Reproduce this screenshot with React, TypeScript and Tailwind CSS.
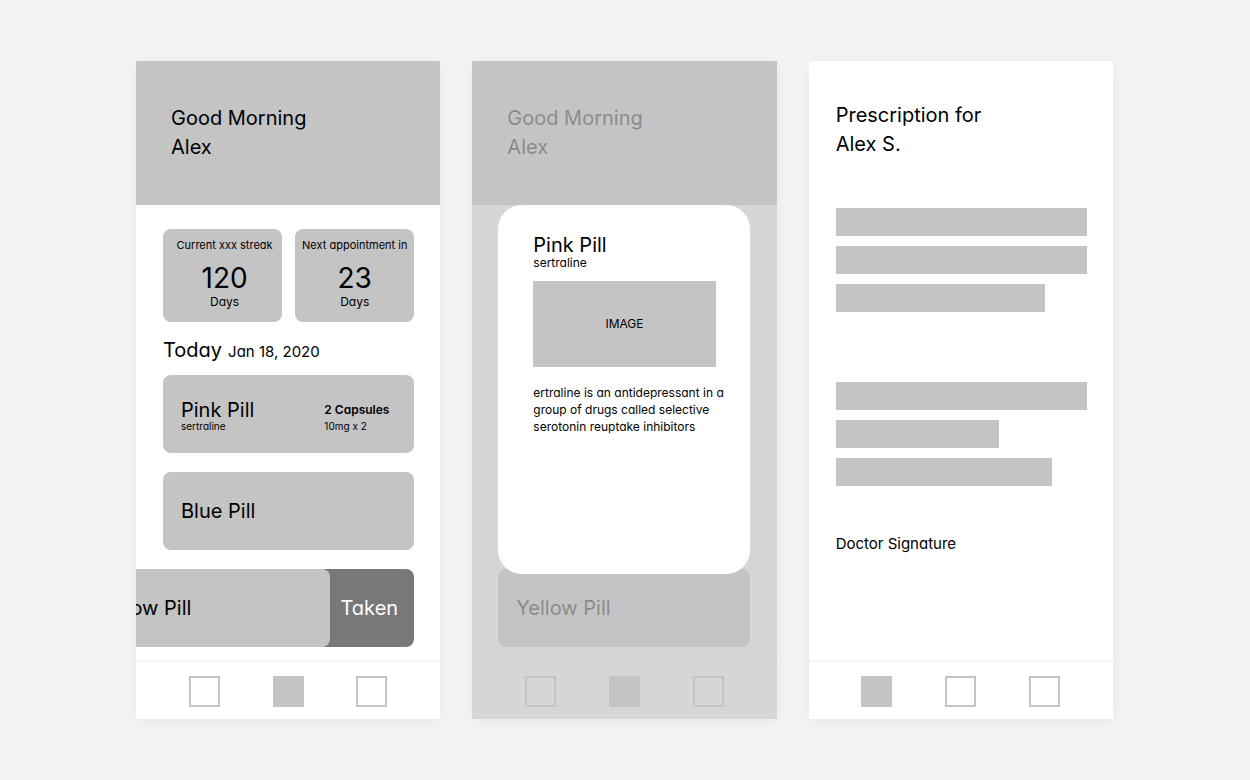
import type { ReactNode } from "react";

function Screen({ label, active, overlay, children }: { label: string; active: number; overlay?: ReactNode; children: ReactNode }) {
  return (
    <section aria-label={label} className="relative flex min-h-[658px] flex-col overflow-hidden bg-white shadow-[0_3px_16px_rgba(0,0,0,0.06)]">
      {children}
      <nav className="flex justify-evenly border-t-2 border-[#f4f4f4] pt-3.5 pb-3">
        {["Prescriptions", "Home", "Profile"].map((name, i) => (
          <button
            key={name}
            type="button"
            aria-label={name}
            className={i === active ? "size-[31px] bg-[#c4c4c4]" : "size-[31px] border-2 border-[#c4c4c4]"}
          />
        ))}
      </nav>
      {overlay}
    </section>
  );
}

function Greeting() {
  return (
    <header className="bg-[#c4c4c4] pt-[43px] pb-[43px] pl-[35px]">
      <h1 className="text-xl leading-[29px]">
        Good Morning
        <br />
        Alex
      </h1>
    </header>
  );
}

function Stat({ label, value }: { label: string; value: number }) {
  return (
    <div className="flex flex-col items-center rounded-lg bg-[#c4c4c4] pt-2 pb-3 whitespace-nowrap first:pl-1">
      <p className="text-[11px] leading-4">{label}</p>
      <p className="mt-[9px] text-[28px] leading-8">{value}</p>
      <p className="text-xs leading-4">Days</p>
    </div>
  );
}

const cardClass = "flex h-[78px] items-center rounded-lg bg-[#c4c4c4] pl-[18px] text-xl leading-5";

function HomeScreen() {
  return (
    <Screen label="Home" active={1}>
      <Greeting />
      <main className="flex-1 pt-6 pr-[26px] pb-[13px] pl-[27px]">
        <div className="grid grid-cols-2 gap-[13px]">
          <Stat label="Current xxx streak" value={120} />
          <Stat label="Next appointment in" value={23} />
        </div>
        <h2 className="mt-3.5 flex items-baseline gap-1.5 text-xl leading-7">
          Today <span className="text-[15px] leading-6">Jan 18, 2020</span>
        </h2>
        <ul className="mt-[11px] flex flex-col gap-[19px]">
          <li className={`${cardClass} justify-between pt-1 pr-[26px]`}>
            <div>
              <p>Pink Pill</p>
              <p className="text-[10px] leading-3">sertraline</p>
            </div>
            <div className="w-16 whitespace-nowrap">
              <p className="text-xs leading-5 font-semibold">2 Capsules</p>
              <p className="text-[10px] leading-3">10mg x 2</p>
            </div>
          </li>
          <li className={cardClass}>Blue Pill</li>
          <li className="-ml-[84px] flex rounded-lg bg-[#787878]">
            <div className={`${cardClass} flex-1`}>Yellow Pill</div>
            <button type="button" className="w-[84px] pr-1.5 text-xl text-white">
              Taken
            </button>
          </li>
        </ul>
      </main>
    </Screen>
  );
}

function PillDetail() {
  return (
    <div className="absolute inset-0 flex flex-col bg-[#c4c4c4]/70 pt-36 pr-[27px] pb-[145px] pl-[26px]">
      <div role="dialog" aria-labelledby="pill-name" className="flex-1 rounded-3xl bg-white pt-[30px] pl-[35px]">
        <h2 id="pill-name" className="text-xl leading-5">
          Pink Pill
        </h2>
        <p className="text-xs leading-4">sertraline</p>
        <div className="mt-2.5 mr-[34px] flex h-[86px] items-center justify-center bg-[#c4c4c4] text-xs">IMAGE</div>
        <p className="mt-[17px] text-xs leading-[17px] whitespace-nowrap">
          ertraline is an antidepressant in a
          <br />
          group of drugs called selective
          <br />
          serotonin reuptake inhibitors
        </p>
      </div>
    </div>
  );
}

function DetailScreen() {
  return (
    <Screen label="Pill details" active={1} overlay={<PillDetail />}>
      <Greeting />
      <main className="flex flex-1 flex-col justify-end pr-[27px] pb-[13px] pl-[26px]">
        <div className={cardClass}>Yellow Pill</div>
      </main>
    </Screen>
  );
}

function Lines({ widths }: { widths: string[] }) {
  return (
    <div className="flex flex-col gap-2.5">
      {widths.map((width, i) => (
        <div key={i} className={`h-7 bg-[#c4c4c4] ${width}`} />
      ))}
    </div>
  );
}

function PrescriptionScreen() {
  return (
    <Screen label="Prescription" active={0}>
      <main className="flex-1 pt-10 pr-[26px] pl-[27px]">
        <h1 className="text-xl leading-[29px]">
          Prescription for
          <br />
          Alex S.
        </h1>
        <div className="mt-[49px] flex flex-col gap-[70px]">
          <Lines widths={["w-full", "w-full", "w-5/6"]} />
          <Lines widths={["w-full", "w-[65%]", "w-[86%]"]} />
        </div>
        <p className="mt-[47px] text-[15px] leading-[22px]">Doctor Signature</p>
      </main>
    </Screen>
  );
}

export default function App() {
  return (
    <div className="min-h-screen bg-[#f4f4f4] px-8 py-[61px] font-['Inter',sans-serif] text-black [font-feature-settings:'cv11'] lg:pr-[137px] lg:pl-[136px]">
      <div className="grid grid-cols-1 gap-8 md:grid-cols-3">
        <HomeScreen />
        <DetailScreen />
        <PrescriptionScreen />
      </div>
    </div>
  );
}
